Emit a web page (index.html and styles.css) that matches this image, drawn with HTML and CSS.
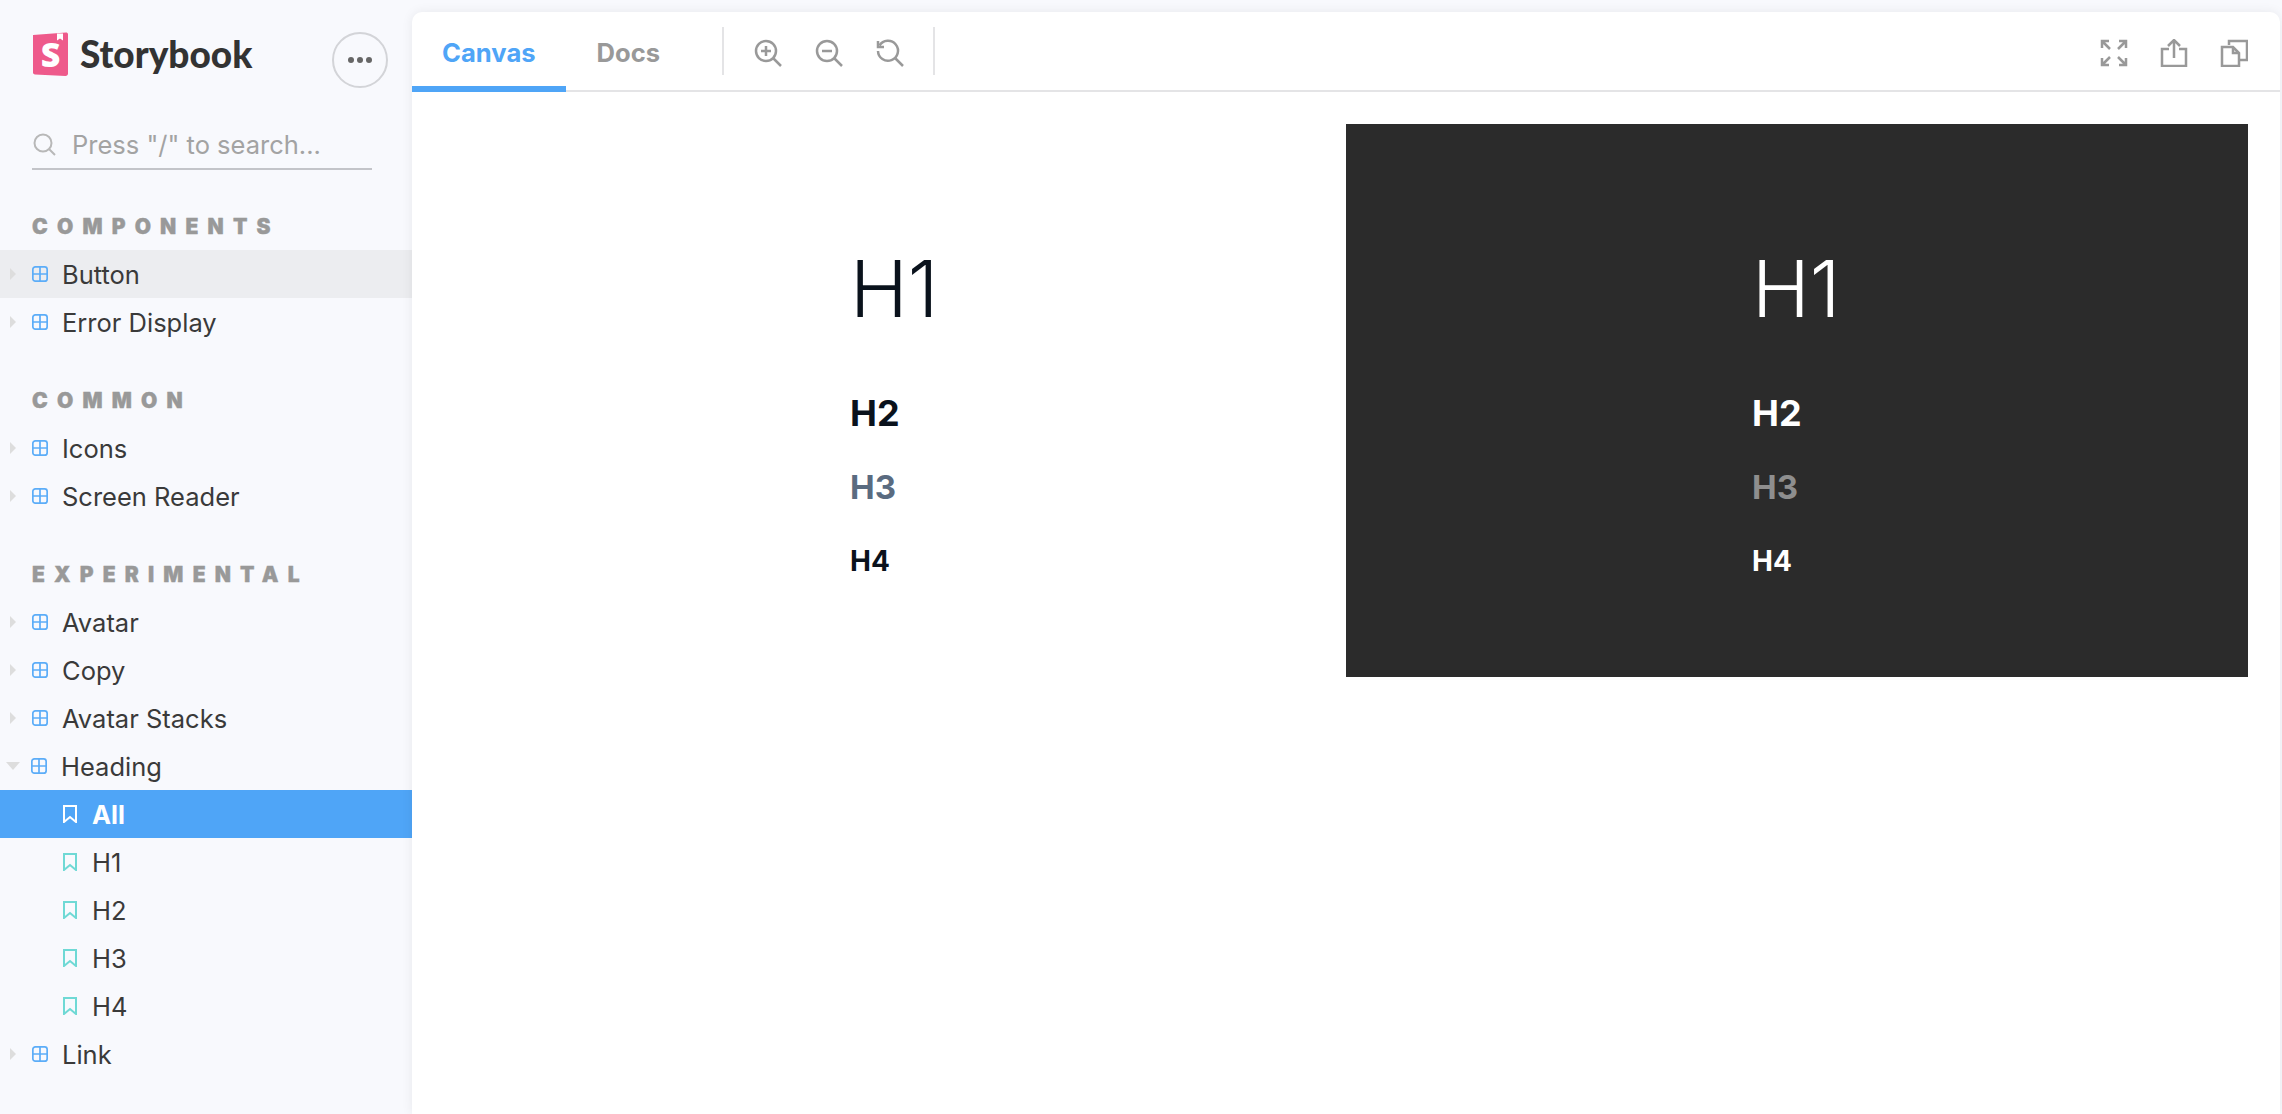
FILE: index.html
```html
<!DOCTYPE html>
<html lang="en">
<head>
<meta charset="UTF-8">
<title>Storybook</title>
<link rel="stylesheet" href="styles.css">
</head>
<body>

<svg class="defs" width="0" height="0">
  <symbol id="grid" viewBox="0 0 16 16">
    <rect x="0.85" y="0.85" width="14.3" height="14.3" rx="2.5" fill="none" stroke="currentColor" stroke-width="1.7"/>
    <path d="M8 1v14M1 8h14" fill="none" stroke="currentColor" stroke-width="1.7"/>
  </symbol>
  <symbol id="bookmark" viewBox="0 0 14 18">
    <path d="M1 1h12v16l-6-5-6 5z" fill="none" stroke="currentColor" stroke-width="2"/>
  </symbol>
</svg>

<aside class="sidebar">
  <div class="brand">
    <svg class="logo" viewBox="0 0 36 44">
      <path d="M1 3 34 0.5c1 0 2 .5 2 2v39c0 1.500-1 2.500-2.500 2.500L3 42.500c-1 0-2-1-2-2z" fill="#ee5a8b"/>
      <path d="M25 1.500h6v7l-3-2-3 2z" fill="#fff"/>
      <text x="18.500" y="35" class="logo-s">S</text>
    </svg>
    <span class="brand-name">Storybook</span>
    <button class="menu-btn"><span></span><span></span><span></span></button>
  </div>

  <div class="search">
    <svg width="23" height="23" viewBox="0 0 23 23" fill="none" stroke="#b8b8b8" stroke-width="2">
      <circle cx="10" cy="10" r="8.500"/><path d="M16 16l6 6"/>
    </svg>
    <span>Press "/" to search...</span>
  </div>

  <h2 class="section first">COMPONENTS</h2>
  <div class="row hover"><i class="arrow"></i><svg class="grid"><use href="#grid"/></svg>Button</div>
  <div class="row"><i class="arrow"></i><svg class="grid"><use href="#grid"/></svg>Error Display</div>

  <h2 class="section">COMMON</h2>
  <div class="row"><i class="arrow"></i><svg class="grid"><use href="#grid"/></svg>Icons</div>
  <div class="row"><i class="arrow"></i><svg class="grid"><use href="#grid"/></svg>Screen Reader</div>

  <h2 class="section">EXPERIMENTAL</h2>
  <div class="row"><i class="arrow"></i><svg class="grid"><use href="#grid"/></svg>Avatar</div>
  <div class="row"><i class="arrow"></i><svg class="grid"><use href="#grid"/></svg>Copy</div>
  <div class="row"><i class="arrow"></i><svg class="grid"><use href="#grid"/></svg>Avatar Stacks</div>
  <div class="row"><i class="arrow open"></i><svg class="grid"><use href="#grid"/></svg>Heading</div>
  <div class="row story active"><svg class="mark"><use href="#bookmark"/></svg>All</div>
  <div class="row story"><svg class="mark"><use href="#bookmark"/></svg>H1</div>
  <div class="row story"><svg class="mark"><use href="#bookmark"/></svg>H2</div>
  <div class="row story"><svg class="mark"><use href="#bookmark"/></svg>H3</div>
  <div class="row story"><svg class="mark"><use href="#bookmark"/></svg>H4</div>
  <div class="row"><i class="arrow"></i><svg class="grid"><use href="#grid"/></svg>Link</div>
</aside>

<main class="main">
  <div class="toolbar">
    <a class="tab selected">Canvas</a>
    <a class="tab docs">Docs</a>
    <div class="sep"></div>
    <div class="tools">
      <svg class="tool" viewBox="0 0 28 28"><circle cx="12" cy="12" r="10"/><path d="M19.500 19.500 27 27M12 7v10M7 12h10"/></svg>
      <svg class="tool" viewBox="0 0 28 28"><circle cx="12" cy="12" r="10"/><path d="M19.500 19.500 27 27M7 12h10"/></svg>
      <svg class="tool" viewBox="0 0 28 28"><path d="M3.500 6.500A10 10 0 1 1 2 12"/><path d="M19.500 19.500 27 27M2 2v6h6"/></svg>
    </div>
    <div class="sep"></div>
    <div class="actions">
      <svg class="tool" viewBox="0 0 28 28"><path d="M2 9V2h7M2 2l8 8M19 2h7v7M26 2l-8 8M2 19v7h7M2 26l8-8M19 26h7v-7M26 26l-8-8"/></svg>
      <svg class="tool" viewBox="0 0 28 28"><path d="M9 10H2v17h24V10h-7M14 19V2M8 7l6-6 6 6"/></svg>
      <svg class="tool" viewBox="0 0 28 28"><path d="M9 6V2h12l6 0v19h-8"/><path d="M2 8h11l6 6v13H2zM13 8v6h6"/></svg>
    </div>
  </div>
  <div class="canvas">
    <section class="panel">
      <h1 class="h1">H1</h1>
      <h2 class="h2">H2</h2>
      <h3 class="h3">H3</h3>
      <h4 class="h4">H4</h4>
    </section>
    <section class="panel dark">
      <h1 class="h1">H1</h1>
      <h2 class="h2">H2</h2>
      <h3 class="h3">H3</h3>
      <h4 class="h4">H4</h4>
    </section>
  </div>
</main>

</body>
</html>
```

FILE: styles.css
```css
* {
  box-sizing: border-box;
}
html, body {
  height: 100%;
}
body {
  margin: 0;
  display: flex;
  overflow: hidden;
  background: #f8f9fd;
  color: #333;
  font-family: Inter, "Liberation Sans", sans-serif;
}
.defs {
  position: absolute;
}

/* sidebar */
.sidebar {
  width: 412px;
  flex: none;
  padding-top: 32px;
}
.brand {
  height: 56px;
  padding-left: 32px;
  display: flex;
  align-items: flex-start;
}
.logo {
  width: 36px;
  height: 44px;
  flex: none;
  overflow: visible;
}
.logo-s {
  font-family: "Open Sans", sans-serif;
  font-weight: 800;
  font-size: 34px;
  fill: #fff;
  text-anchor: middle;
}
.brand-name {
  margin-left: 12px;
  font-family: "Lato", sans-serif;
  font-weight: 900;
  font-size: 37px;
  line-height: 44px;
  color: #333;
}
.menu-btn {
  margin-left: 80px;
  width: 56px;
  height: 56px;
  border: 2px solid #d3d4d8;
  border-radius: 50%;
  background: transparent;
  padding: 0;
  display: flex;
  align-items: center;
  justify-content: center;
  gap: 3px;
}
.menu-btn span {
  width: 6px;
  height: 6px;
  border-radius: 50%;
  background: #666;
}
.search {
  margin: 40px 40px 0 32px;
  height: 42px;
  padding-bottom: 8px;
  border-bottom: 2px solid #c3c4c9;
  display: flex;
  align-items: center;
  gap: 16px;
  font-size: 25.5px;
  color: #a3a3a3;
}
.search svg {
  margin-left: 1px;
}
.section {
  margin: 30px 0 0;
  height: 48px;
  padding-left: 32px;
  font-size: 21px;
  font-weight: 900;
  line-height: 50px;
  letter-spacing: 9.200px;
  color: #999;
  -webkit-text-stroke: 0.4px #999;
}
.section.first {
  margin-top: 32px;
}
.row {
  height: 48px;
  display: flex;
  align-items: center;
  padding-left: 10px;
  font-size: 25.5px;
  color: #3a3a3a;
}
.row.hover {
  background: #ecedf0;
}
.arrow {
  width: 0;
  height: 0;
  flex: none;
  border-left: 6px solid #ddd;
  border-top: 6px solid transparent;
  border-bottom: 6px solid transparent;
  margin-right: 16px;
}
.arrow.open {
  margin: 0 11px 0 -4px;
  border-top: 8px solid #ddd;
  border-left: 7.500px solid transparent;
  border-right: 7.500px solid transparent;
  border-bottom: 0;
}
.grid {
  width: 16px;
  height: 16px;
  flex: none;
  margin-right: 14px;
  color: #5cadf8;
}
.story {
  padding-left: 63px;
}
.mark {
  width: 14px;
  height: 18px;
  flex: none;
  margin-right: 15px;
  color: #6fd9d5;
}
.active {
  background: #4fa5f7;
  color: #fff;
  font-weight: 700;
}
.active .mark {
  color: #fff;
}

/* main area */
.main {
  flex: 1;
  margin: 12px 2px 0 0;
  background: #fff;
  border-radius: 10px 10px 0 0;
  box-shadow: 0 0 12px rgba(0, 0, 0, 0.07);
  display: flex;
  flex-direction: column;
}
.toolbar {
  height: 80px;
  flex: none;
  border-bottom: 2px solid #e4e4e6;
  display: flex;
  align-items: center;
  padding-right: 32px;
}
.tab {
  height: 80px;
  align-self: flex-start;
  padding: 0 30px;
  font-size: 25.6px;
  font-weight: 700;
  line-height: 82px;
  color: #999;
}
.tab.selected {
  color: #4fa5f7;
  border-bottom: 6px solid #4fa5f7;
}
.tab.docs {
  padding: 0 62px 0 1px;
  margin-left: 30px;
}
.sep {
  width: 2px;
  height: 48px;
  background: #e4e4e6;
}
.tools {
  display: flex;
  gap: 33px;
  padding: 4px 29px 0 30px;
}
.actions {
  margin-left: auto;
  display: flex;
  gap: 32px;
  padding-top: 4px;
}
.tool {
  width: 28px;
  height: 28px;
  fill: none;
  stroke: #999;
  stroke-width: 2.500;
}
.canvas {
  flex: 1;
  padding: 32px 32px 0;
  display: flex;
  align-items: flex-start;
}
.panel {
  flex: 1;
  height: 553px;
  padding: 119px 0 0 406px;
  color: #0a121c;
}
.panel.dark {
  background: #2b2b2b;
  color: #fff;
}
.panel h1, .panel h2, .panel h3, .panel h4 {
  margin: 0;
}
.panel .h1 {
  font-size: 78px;
  font-weight: 300;
  line-height: 92px;
  margin-bottom: 56px;
}
.panel .h2 {
  font-size: 36px;
  font-weight: 700;
  line-height: 44px;
  margin-bottom: 30px;
}
.panel .h3 {
  font-size: 33px;
  font-weight: 700;
  line-height: 44px;
  margin-bottom: 30px;
  color: #5a6b80;
}
.panel.dark .h3 {
  color: #8e8e8e;
}
.panel .h4 {
  font-size: 28px;
  font-weight: 700;
  line-height: 44px;
}
```
